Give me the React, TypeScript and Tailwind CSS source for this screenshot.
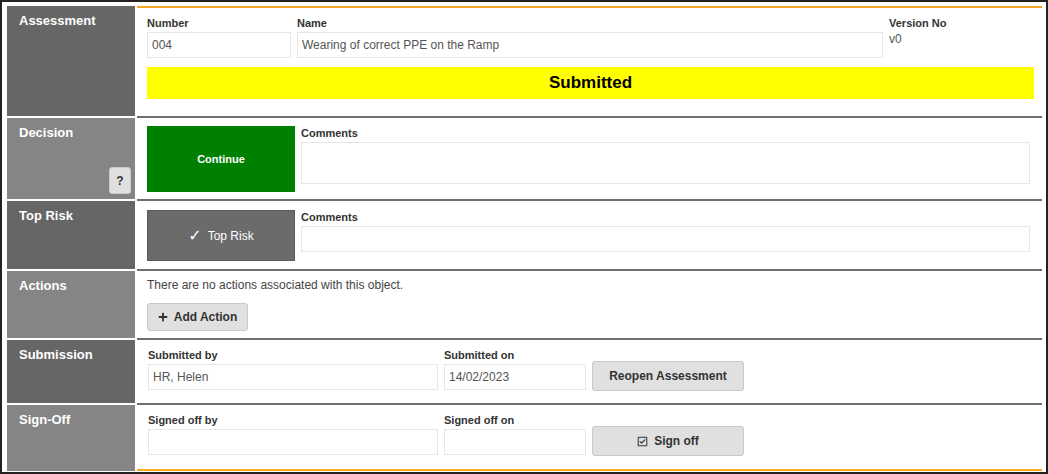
import { FaPlus, FaRegCheckSquare } from "react-icons/fa";

const font = { fontFamily: '"Liberation Sans", Arial, sans-serif' };

function Label({ text, tone, children }: { text: string; tone: "dark" | "light"; children?: React.ReactNode }) {
  return (
    <div
      className={`flex w-[130px] shrink-0 flex-col justify-between border-r-2 border-white pl-[12px] pt-[7px] pb-[5px] pr-[4px] text-[13px] font-bold leading-[16px] text-white ${
        tone === "dark" ? "bg-[#666666]" : "bg-[#858585]"
      }`}
    >
      <span>{text}</span>
      {children}
    </div>
  );
}

function FieldLabel({ children }: { children: React.ReactNode }) {
  return <div className="mb-[2px] h-[14px] text-[11px] font-bold leading-[14px] text-[#333]">{children}</div>;
}

function Input({ value, className }: { value?: string; className: string }) {
  return (
    <div className={`flex items-center border border-[#e6e6e6] bg-white pl-[4px] text-[12px] text-[#555] ${className}`}>
      {value}
    </div>
  );
}

function GreyButton({ children, className }: { children: React.ReactNode; className: string }) {
  return (
    <button className={`flex items-center justify-center gap-[6px] rounded-[3px] border border-[#c9c9c9] bg-[#e0e0e0] text-[12px] font-bold text-[#333] ${className}`}>
      {children}
    </button>
  );
}

export default function App() {
  return (
    <div style={font} className="flex h-[474px] w-[1048px] flex-col border-2 border-[#222] bg-white pt-[4px] pl-[5px] pr-[4px] pb-[1px]">
      {/* Assessment */}
      <div className="flex h-[110px]">
        <Label text="Assessment" tone="dark" />
        <div className="flex-1 border-t-2 border-[#f7a823] pl-[10px] pr-[8px] pt-[8px]">
          <div className="flex gap-[6px]">
            <div className="w-[144px]">
              <FieldLabel>Number</FieldLabel>
              <Input value="004" className="h-[26px]" />
            </div>
            <div className="w-[586px]">
              <FieldLabel>Name</FieldLabel>
              <Input value="Wearing of correct PPE on the Ramp" className="h-[26px]" />
            </div>
            <div className="flex-1">
              <FieldLabel>Version No</FieldLabel>
              <div className="text-[12px] leading-[14px] text-[#555]">v0</div>
            </div>
          </div>
          <div className="mt-[9px] flex h-[32px] items-center justify-center bg-[#ffff00] text-[17px] font-bold text-black">
            Submitted
          </div>
        </div>
      </div>

      {/* Decision */}
      <div className="flex h-[83px] border-t-2 border-white">
        <Label text="Decision" tone="light">
          <button className="flex h-[27px] w-[22px] items-center justify-center self-end rounded-[3px] border border-[#c9c9c9] bg-[#e0e0e0] text-[12px] font-bold text-[#333]">
            ?
          </button>
        </Label>
        <div className="-mt-[2px] flex flex-1 gap-[6px] border-t-2 border-[#6f6f6f] pl-[10px] pr-[12px] pt-[8px]">
          <button className="flex h-[66px] w-[148px] items-center justify-center bg-[#008000] text-[11px] font-bold text-white">
            Continue
          </button>
          <div className="flex-1">
            <FieldLabel>Comments</FieldLabel>
            <Input className="mt-[2px] h-[42px]" />
          </div>
        </div>
      </div>

      {/* Top Risk */}
      <div className="flex h-[70px] border-t-2 border-white">
        <Label text="Top Risk" tone="dark" />
        <div className="-mt-[2px] flex flex-1 gap-[6px] border-t-2 border-[#6f6f6f] pl-[10px] pr-[12px] pt-[9px]">
          <button className="flex h-[51px] w-[148px] items-center justify-center gap-[6px] border border-[#5a5a5a] bg-[#6b6b6b] text-[12px] text-white">
            <span className="text-[16px] font-bold leading-none" style={{ fontFamily: '"DejaVu Sans", sans-serif' }}>✓</span>
            Top Risk
          </button>
          <div className="flex-1">
            <FieldLabel>Comments</FieldLabel>
            <Input className="mt-[1px] h-[26px]" />
          </div>
        </div>
      </div>

      {/* Actions */}
      <div className="flex h-[69px] border-t-2 border-white">
        <Label text="Actions" tone="light" />
        <div className="-mt-[2px] flex-1 border-t-2 border-[#6f6f6f] pl-[10px] pt-[7px]">
          <div className="text-[12px] leading-[14px] text-[#444]">There are no actions associated with this object.</div>
          <GreyButton className="mt-[11px] h-[28px] w-[101px]">
            <FaPlus className="text-[10px]" />
            Add Action
          </GreyButton>
        </div>
      </div>

      {/* Submission */}
      <div className="flex h-[65px] border-t-2 border-white">
        <Label text="Submission" tone="dark" />
        <div className="-mt-[2px] flex flex-1 items-end gap-[6px] border-t-2 border-[#6f6f6f] pl-[11px] pb-[13px]">
          <div className="w-[290px]">
            <FieldLabel>Submitted by</FieldLabel>
            <Input value="HR, Helen" className="h-[26px]" />
          </div>
          <div className="w-[142px]">
            <FieldLabel>Submitted on</FieldLabel>
            <Input value="14/02/2023" className="h-[26px]" />
          </div>
          <GreyButton className="mb-[-1px] h-[30px] w-[152px]">Reopen Assessment</GreyButton>
        </div>
      </div>

      {/* Sign-Off */}
      <div className="flex flex-1 border-t-2 border-white">
        <Label text="Sign-Off" tone="light" />
        <div className="-mt-[2px] flex flex-1 flex-col border-t-2 border-b-2 border-t-[#6f6f6f] border-b-[#f7a823]">
          <div className="flex flex-1 items-end gap-[6px] pl-[11px] pb-[14px]">
            <div className="w-[290px]">
              <FieldLabel>Signed off by</FieldLabel>
              <Input className="h-[26px]" />
            </div>
            <div className="w-[142px]">
              <FieldLabel>Signed off on</FieldLabel>
              <Input className="h-[26px]" />
            </div>
            <GreyButton className="mb-[-1px] h-[30px] w-[152px]">
              <FaRegCheckSquare className="text-[11px]" />
              Sign off
            </GreyButton>
          </div>
        </div>
      </div>
    </div>
  );
}
